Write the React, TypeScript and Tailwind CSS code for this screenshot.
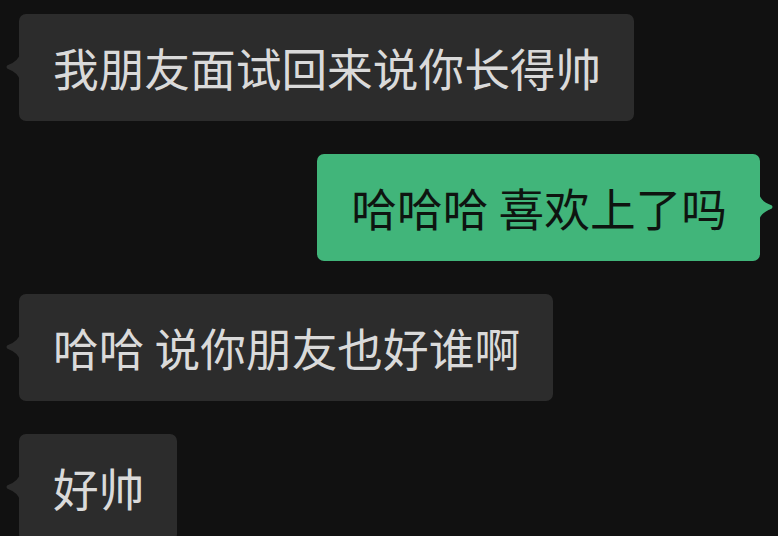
const FONT = { fontFamily: '"Noto Sans CJK SC", "Noto Sans", sans-serif' }

type Msg = { text: string; mine?: boolean }

const MESSAGES: Msg[] = [
  { text: '我朋友面试回来说你长得帅' },
  { text: '哈哈哈 喜欢上了吗', mine: true },
  { text: '哈哈 说你朋友也好谁啊' },
  { text: '好帅' },
]

function Tail({ mine }: { mine?: boolean }) {
  return (
    <svg
      width="15"
      height="28"
      viewBox="0 0 15 28"
      className={`absolute top-[39px] ${mine ? 'right-[-14px] scale-x-[-1]' : 'left-[-14px]'}`}
    >
      <path
        d="M15 0 Q14 8 2.5 12.3 Q0.5 14 2.5 15.7 Q14 20 15 28 Z"
        fill={mine ? '#41b57a' : '#2c2c2c'}
      />
    </svg>
  )
}

export default function App() {
  return (
    <div className="w-[778px] h-[536px] overflow-hidden bg-[#111111]" style={FONT}>
      <div className="flex flex-col gap-[33px] pt-[14px]">
        {MESSAGES.map((m, i) => (
          <div key={i} className={`flex ${m.mine ? 'justify-end pr-[18px]' : 'justify-start pl-[19px]'}`}>
            <div
              className={`relative rounded-[7px] pl-[34px] pr-[33px] py-[21px] text-[45.7px] leading-[65px] whitespace-pre ${
                m.mine ? 'bg-[#41b57a] text-[#0e1410]' : 'bg-[#2c2c2c] text-[#dadada]'
              }`}
            >
              <Tail mine={m.mine} />
              {m.text}
            </div>
          </div>
        ))}
      </div>
    </div>
  )
}
